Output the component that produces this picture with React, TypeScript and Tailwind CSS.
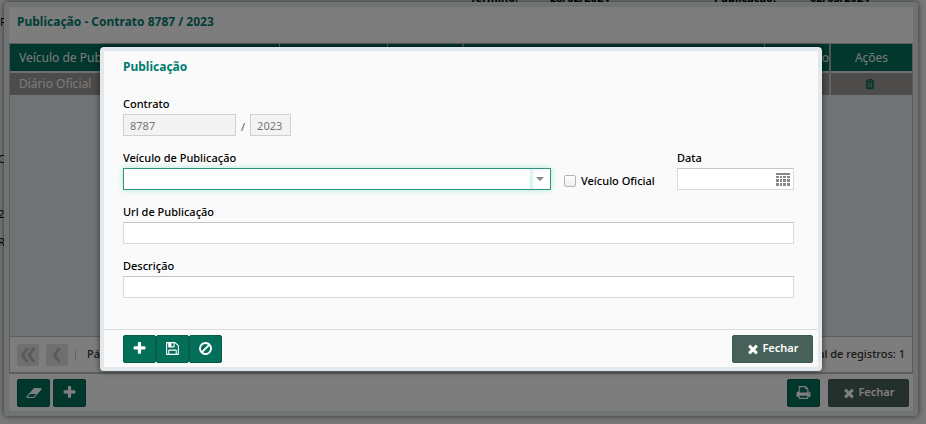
import type { ButtonHTMLAttributes, ReactNode } from 'react';

const paths = {
  plus: 'M1600 736v192q0 40-28 68t-68 28h-416v416q0 40-28 68t-68 28h-192q-40 0-68-28t-28-68v-416h-416q-40 0-68-28t-28-68v-192q0-40 28-68t68-28h416v-416q0-40 28-68t68-28h192q40 0 68 28t28 68v416h416q40 0 68 28t28 68z',
  times: 'M1490 1322q0 40-28 68l-136 136q-28 28-68 28t-68-28l-294-294-294 294q-28 28-68 28t-68-28l-136-136q-28-28-28-68t28-68l294-294-294-294q-28-28-28-68t28-68l136-136q28-28 68-28t68 28l294 294 294-294q28-28 68-28t68 28l136 136q28 28 28 68t-28 68l-294 294 294 294q28 28 28 68z',
  save: 'M512 1536h768v-384h-768v384zm896 0h128v-896q0-14-10-38.5t-20-34.5l-281-281q-10-10-34-20t-39-10v416q0 40-28 68t-68 28h-576q-40 0-68-28t-28-68v-416h-128v1280h128v-416q0-40 28-68t68-28h832q40 0 68 28t28 68v416zm-384-928v-320q0-13-9.5-22.5t-22.5-9.5h-192q-13 0-22.5 9.5t-9.5 22.5v320q0 13 9.5 22.5t22.5 9.5h192q13 0 22.5-9.5t9.5-22.5zm640 32v928q0 40-28 68t-68 28h-1344q-40 0-68-28t-28-68v-1344q0-40 28-68t68-28h928q40 0 88 20t76 48l280 280q28 28 48 76t20 88z',
  ban: 'M1440 893q0-161-87-295l-754 753q137 89 297 89 111 0 211.5-43.5t173.5-116.5 116-174.5 43-212.5zm-999 299l755-754q-135-91-300-91-148 0-273 73t-198 199-73 274q0 162 89 299zm1223-299q0 157-61 300t-163.5 246-245 164-298.5 61-298.5-61-245-164-163.5-246-61-300 61-299.5 163.5-245.5 245-164 298.5-61 298.5 61 245 164 163.5 245.5 61 299.5z',
  print: 'M448 1536h896v-256h-896v256zm0-640h896v-384h-160q-40 0-68-28t-28-68v-160h-640v640zm1152 64q0-26-19-45t-45-19-45 19-19 45 19 45 45 19 45-19 19-45zm128 0v416q0 13-9.5 22.5t-22.5 9.5h-224v160q0 40-28 68t-68 28h-960q-40 0-68-28t-28-68v-160h-224q-13 0-22.5-9.5t-9.5-22.5v-416q0-79 56.5-135.5t135.5-56.5h64v-544q0-40 28-68t68-28h672q40 0 88 20t76 48l152 152q28 28 48 76t20 88v256h64q79 0 135.5 56.5t56.5 135.5z',
  eraser: 'M960 1408l336-384h-768l-336 384h768zm1013-1077q15 34 9.5 71.5t-30.5 65.5l-896 1024q-38 44-96 44h-768q-38 0-69.5-20.5t-47.5-54.5q-15-34-9.5-71.5t30.5-65.5l896-1024q38-44 96-44h768q38 0 69.5 20.5t47.5 54.5z',
  trash: 'M704 1376v-704q0-14-9-23t-23-9h-64q-14 0-23 9t-9 23v704q0 14 9 23t23 9h64q14 0 23-9t9-23zm256 0v-704q0-14-9-23t-23-9h-64q-14 0-23 9t-9 23v704q0 14 9 23t23 9h64q14 0 23-9t9-23zm256 0v-704q0-14-9-23t-23-9h-64q-14 0-23 9t-9 23v704q0 14 9 23t23 9h64q14 0 23-9t9-23zm-544-992h448l-48-117q-7-9-17-11h-317q-10 2-17 11zm928 32v64q0 14-9 23t-23 9h-96v948q0 83-47 143.5t-113 60.5h-832q-66 0-113-58.5t-47-141.5v-952h-96q-14 0-23-9t-9-23v-64q0-14 9-23t23-9h309l70-167q15-37 54-63t79-26h320q40 0 79 26t54 63l70 167h309q14 0 23 9t9 23z',
};

interface IconProps {
  name: keyof typeof paths;
  className?: string;
}

const Icon = ({ name, className = 'size-[14px]' }: IconProps) => (
  <svg
    viewBox={name === 'eraser' ? '0 0 2048 1792' : '0 0 1792 1792'}
    className={`${className} shrink-0 fill-current`}
    aria-hidden="true"
  >
    <path d={paths[name]} />
  </svg>
);

const IconButton = ({ icon, ...rest }: { icon: keyof typeof paths } & ButtonHTMLAttributes<HTMLButtonElement>) => (
  <button
    type="button"
    className="flex h-7 w-[33px] items-center justify-center rounded-xs border border-[#045c49] bg-[#036f59] text-white"
    {...rest}
  >
    <Icon name={icon} className={icon === 'eraser' ? 'h-[14px] w-4' : 'size-[15px]'} />
  </button>
);

const CloseButton = () => (
  <button
    type="button"
    className="flex h-7 w-[81px] items-center justify-center gap-[2px] rounded-xs border border-[#3e5953] bg-[#48605a] text-[11px] font-semibold text-white"
  >
    <Icon name="times" />
    Fechar
  </button>
);

const Field = ({ id, label, className = '', children }: { id: string; label: string; className?: string; children: ReactNode }) => (
  <div className={className}>
    <label htmlFor={id} className="block h-[18px] leading-4 font-medium">
      {label}
    </label>
    {children}
  </div>
);

const inputClass = 'block h-[22px] w-full border border-[#d9d9d9] border-t-[#c5c5c5] bg-white px-1.5 outline-none';
const disabledClass = 'block h-[22px] border border-[#d0d0d0] bg-[#f3f3f3] px-1.5 text-[#777]';

const PageBehind = () => (
  <div className="absolute inset-0 overflow-hidden bg-[#f2f2f2] text-[11px]" aria-hidden="true">
    <div className="absolute -top-[10px] left-[470px] flex w-[400px] leading-4 font-bold">
      <span className="w-20">Término:</span>
      <span className="w-[164px]">28/02/2024</span>
      <span className="w-24">Publicação:</span>
      <span>02/03/2024</span>
    </div>
    <span className="absolute top-3.5 left-0">F</span>
    <span className="absolute top-[151px] -left-[2px]">CA</span>
    <span className="absolute top-[206px] -left-[2px]">2</span>
    <span className="absolute top-[234px] -left-[2px]">R</span>
  </div>
);

const ListWindow = () => (
  <section className="absolute top-0.5 right-2 bottom-2 left-1 flex flex-col rounded-sm border-[5px] border-[#e0e6e8] bg-[#fafafa] shadow-[0_0_6px_rgba(0,0,0,0.6)]">
    <h2 className="flex h-9 shrink-0 items-center px-2 pb-1.5 text-[12px] font-bold text-[#007a70]">
      Publicação - Contrato 8787 / 2023
    </h2>
    <div className="flex min-h-0 flex-1 flex-col border border-b-2 border-[#b8bcbd] bg-[#e0e6e8]">
      <table className="w-full table-fixed border-collapse text-[12px]">
        <colgroup>
          <col className="w-[269px]" />
          <col className="w-[108px]" />
          <col className="w-[76px]" />
          <col />
          <col className="w-[66px]" />
          <col className="w-[82px]" />
        </colgroup>
        <thead>
          <tr className="h-7 border-b-2 border-[#e0e0e0] bg-[#036f59] text-[#f5f5f5]">
            <th className="border-r border-[#d0d0d0] px-[9px] text-left font-normal">Veículo de Publicação</th>
            <th className="border-r border-[#d0d0d0]" />
            <th className="border-r-2 border-[#a0a0a0]" />
            <th className="border-r border-[#d0d0d0]" />
            <th className="border-r-2 border-[#b0b0b0] text-right font-normal">Anexo</th>
            <th className="font-normal">Ações</th>
          </tr>
        </thead>
        <tbody>
          <tr className="h-[23px] bg-[#9d9797] text-[#f5f5f5]">
            <td className="px-[9px]">Diário Oficial</td>
            <td />
            <td />
            <td />
            <td className="border-r-2 border-[#c8c8c8]" />
            <td>
              <button type="button" aria-label="Excluir" className="flex w-full justify-center pr-1 text-[#036f59]">
                <Icon name="trash" className="size-[12px]" />
              </button>
            </td>
          </tr>
        </tbody>
      </table>
      <div className="mt-auto flex h-9 items-center gap-[7px] border-t border-[#bdbdbd] bg-[#fafafa] px-[7px] text-[11px] font-medium text-[#333]">
        <button type="button" aria-label="Primeira página" className="flex size-[22px] items-center justify-center rounded-xs bg-[#dedede] text-[#b5b5b5]">
          <svg viewBox="0 0 16 16" className="size-4 fill-none stroke-current stroke-[3]">
            <path d="M7.500 1 2.500 8l5 7M14 1 9 8l5 7" />
          </svg>
        </button>
        <button type="button" aria-label="Página anterior" className="flex size-[22px] items-center justify-center rounded-xs bg-[#dedede] text-[#b5b5b5]">
          <svg viewBox="0 0 16 16" className="size-4 fill-none stroke-current stroke-[3]">
            <path d="M10.500 1 5.500 8l5 7" />
          </svg>
        </button>
        <span className="h-3 w-px bg-[#c8c8c8]" />
        <span className="ml-1">Página</span>
        <span className="ml-auto">Total de registros: 1</span>
      </div>
    </div>
    <footer className="flex h-[37px] shrink-0 items-center gap-[3px] pr-1 pl-2">
      <IconButton icon="eraser" aria-label="Limpar" />
      <IconButton icon="plus" aria-label="Adicionar" />
      <div className="ml-auto flex gap-2">
        <IconButton icon="print" aria-label="Imprimir" />
        <CloseButton />
      </div>
    </footer>
  </section>
);

const PublicationDialog = () => (
  <div
    role="dialog"
    aria-labelledby="dialog-title"
    className="flex w-[722px] max-w-full flex-col rounded-sm border-4 border-[#e2e8eb] bg-[#fafafa] text-[11px] text-black shadow-[0_0_6px_rgba(0,0,0,0.6)]"
  >
    <h1 id="dialog-title" className="flex h-8 items-center px-[19px] text-[12px] font-bold text-[#007a70]">
      Publicação
    </h1>
    <form className="flex flex-col gap-[14px] pt-[13px] pr-6 pb-[31px] pl-[19px]">
      <Field id="contrato" label="Contrato">
        <div className="flex items-center gap-[5px] text-[#555]">
          <input id="contrato" className={`${disabledClass} w-[113px]`} defaultValue="8787" disabled />
          <span className="pt-1">/</span>
          <input aria-label="Ano" className={`${disabledClass} w-[41px]`} defaultValue="2023" disabled />
        </div>
      </Field>
      <div className="flex items-end">
        <Field id="veiculo" label="Veículo de Publicação" className="min-w-0 flex-1">
          <div className="relative">
            <select
              id="veiculo"
              className="block h-[22px] w-full appearance-none border border-[#2f9580] bg-white px-1.5 shadow-[0_0_6px_rgba(60,210,170,0.4)] outline-none"
            />
            <span className="pointer-events-none absolute inset-y-px right-px flex w-5 items-center justify-center bg-linear-to-r from-[#c9f3e8] from-0% to-white to-25%">
              <svg viewBox="0 0 8 4" className="h-1 w-2 fill-[#8a8a8a]">
                <path d="M0 0h8L4 4z" />
              </svg>
            </span>
          </div>
        </Field>
        <label className="mx-[13px] flex h-[22px] w-[100px] items-center gap-[5px] pt-1 font-medium whitespace-nowrap">
          <input
            type="checkbox"
            className="size-3 shrink-0 appearance-none rounded-xs border border-[#b5b5b5] bg-linear-to-b from-white to-[#eeeeee]"
          />
          Veículo Oficial
        </label>
        <Field id="data" label="Data" className="w-[117px]">
          <div className="relative">
            <input id="data" type="text" className={inputClass} />
            <svg viewBox="0 0 14 13" className="absolute top-[5px] right-1 h-[13px] w-[14px] fill-[#888]">
              <path d="M0 0h14v2H0zM0 3h3v2H0zM4 3h2v2H4zM7 3h3v2H7zM11 3h3v2h-3zM0 6h3v3H0zM4 6h2v3H4zM7 6h3v3H7zM11 6h3v3h-3zM0 10h3v3H0zM4 10h2v3H4zM7 10h3v3H7zM11 10h3v3h-3z" />
            </svg>
          </div>
        </Field>
      </div>
      <Field id="url" label="Url de Publicação">
        <input id="url" type="text" className={inputClass} />
      </Field>
      <Field id="descricao" label="Descrição">
        <input id="descricao" type="text" className={inputClass} />
      </Field>
    </form>
    <footer className="flex h-[38px] items-center border-t border-[#dcdcdc] pr-[5px] pl-[19px]">
      <IconButton icon="plus" aria-label="Adicionar" />
      <IconButton icon="save" aria-label="Salvar" />
      <IconButton icon="ban" aria-label="Cancelar" />
      <div className="ml-auto">
        <CloseButton />
      </div>
    </footer>
  </div>
);

export default function App() {
  return (
    <main className="relative min-h-screen overflow-hidden font-['Noto_Sans','Open_Sans',sans-serif]">
      <PageBehind />
      <ListWindow />
      <div className="absolute inset-0 flex items-start justify-center bg-black/50 pt-[47px] pr-1">
        <PublicationDialog />
      </div>
    </main>
  );
}
